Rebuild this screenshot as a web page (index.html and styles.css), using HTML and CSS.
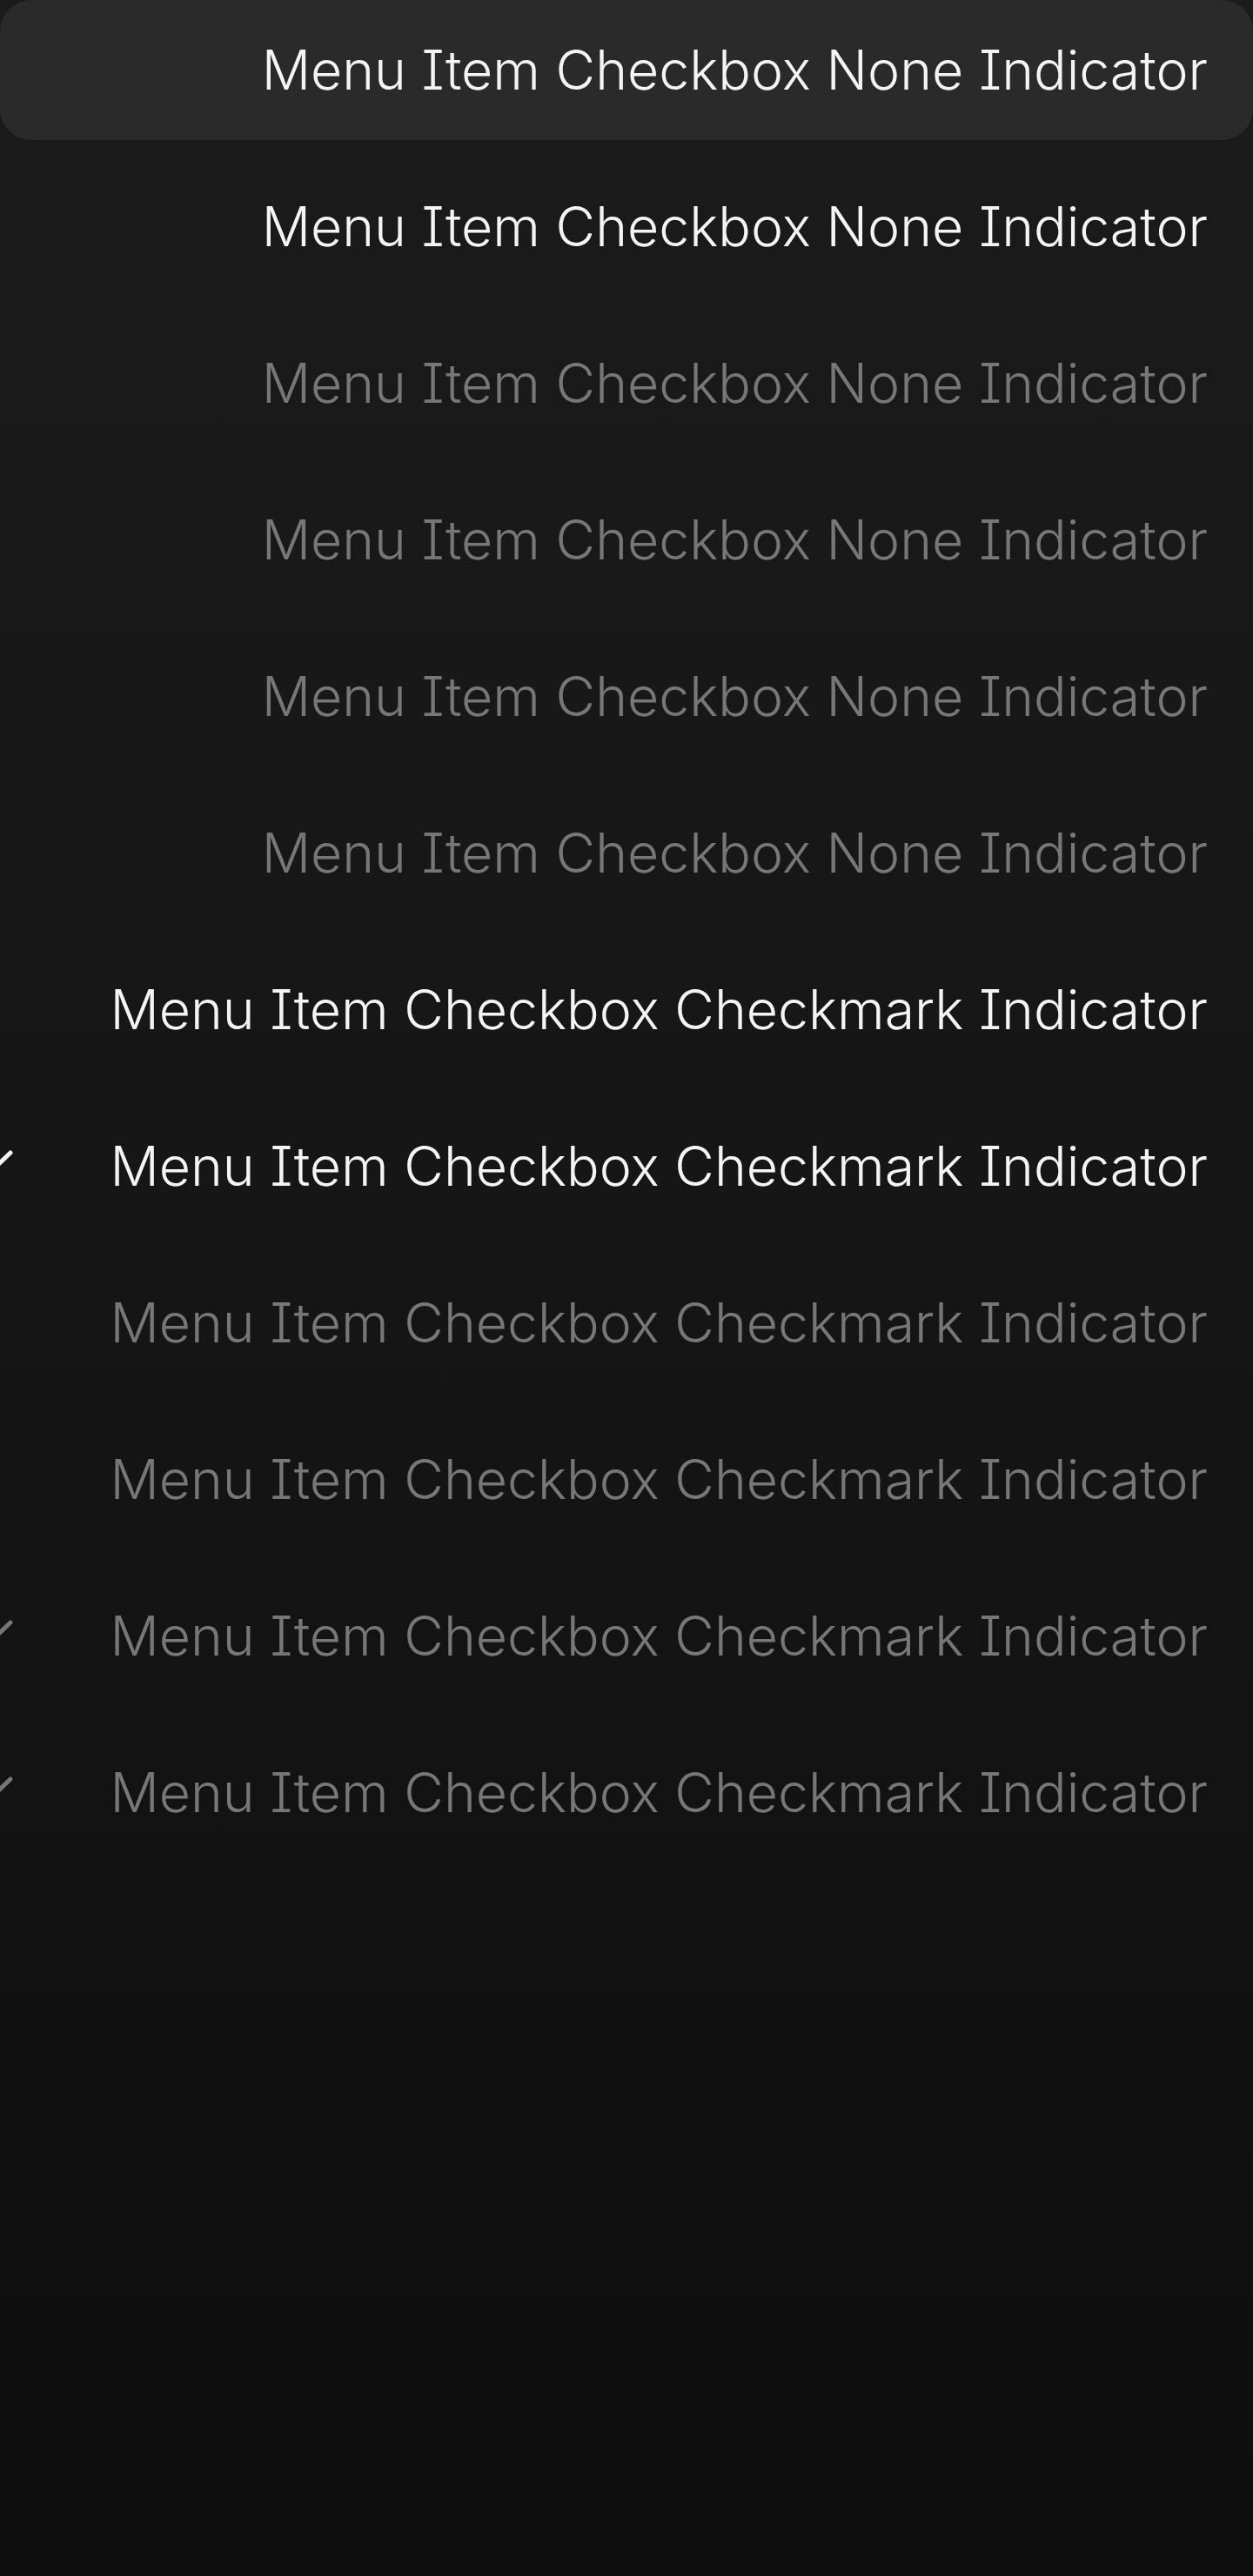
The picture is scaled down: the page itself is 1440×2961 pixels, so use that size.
FILE: index.html
```html
<!DOCTYPE html>
<html lang="en">
<head>
<meta charset="utf-8">
<title>Menu Item Checkbox</title>
<link rel="stylesheet" href="styles.css">
</head>
<body>
<div class="menu" role="menu">
  <div class="item is-highlighted" role="menuitemcheckbox" aria-checked="false"><span class="label">Menu Item Checkbox None Indicator</span></div>
  <div class="item" role="menuitemcheckbox" aria-checked="true"><span class="label">Menu Item Checkbox None Indicator</span></div>
  <div class="item is-disabled" role="menuitemcheckbox" aria-checked="false"><span class="label">Menu Item Checkbox None Indicator</span></div>
  <div class="item is-disabled" role="menuitemcheckbox" aria-checked="true"><span class="label">Menu Item Checkbox None Indicator</span></div>
  <div class="item is-disabled" role="menuitemcheckbox" aria-checked="false"><span class="label">Menu Item Checkbox None Indicator</span></div>
  <div class="item is-disabled" role="menuitemcheckbox" aria-checked="true"><span class="label">Menu Item Checkbox None Indicator</span></div>

  <div class="item" role="menuitemcheckbox" aria-checked="false">
    <svg class="check is-hidden" viewBox="0 0 40 40"><polyline points="4,19 12,28 37,4"/></svg>
    <span class="label">Menu Item Checkbox Checkmark Indicator</span>
  </div>
  <div class="item" role="menuitemcheckbox" aria-checked="true">
    <svg class="check" viewBox="0 0 40 40"><polyline points="4,19 12,28 37,4"/></svg>
    <span class="label">Menu Item Checkbox Checkmark Indicator</span>
  </div>
  <div class="item is-disabled" role="menuitemcheckbox" aria-checked="false">
    <svg class="check is-hidden" viewBox="0 0 40 40"><polyline points="4,19 12,28 37,4"/></svg>
    <span class="label">Menu Item Checkbox Checkmark Indicator</span>
  </div>
  <div class="item is-disabled" role="menuitemcheckbox" aria-checked="false">
    <svg class="check is-hidden" viewBox="0 0 40 40"><polyline points="4,19 12,28 37,4"/></svg>
    <span class="label">Menu Item Checkbox Checkmark Indicator</span>
  </div>
  <div class="item is-disabled" role="menuitemcheckbox" aria-checked="true">
    <svg class="check" viewBox="0 0 40 40"><polyline points="4,19 12,28 37,4"/></svg>
    <span class="label">Menu Item Checkbox Checkmark Indicator</span>
  </div>
  <div class="item is-disabled" role="menuitemcheckbox" aria-checked="true">
    <svg class="check" viewBox="0 0 40 40"><polyline points="4,19 12,28 37,4"/></svg>
    <span class="label">Menu Item Checkbox Checkmark Indicator</span>
  </div>
</div>
</body>
</html>
```

FILE: styles.css
```css
html, body {
  margin: 0;
  padding: 0;
}

body {
  min-height: 2961px;
  background: linear-gradient(to bottom, #1b1b1b 0%, #161616 45%, #0e0e0e 100%);
  font-family: Inter, "Noto Sans", sans-serif;
  font-feature-settings: "cv08" 1;
  overflow: hidden;
}

.menu {
  display: flex;
  flex-direction: column;
  gap: 19px;
}

.item {
  height: 161px;
  display: flex;
  align-items: center;
  justify-content: flex-end;
  padding-right: 52px;
  border-radius: 36px;
  color: #f4f4f4;
  font-size: 62.6px;
  font-weight: 300;
  line-height: 1;
  white-space: nowrap;
}

.item.is-highlighted {
  background: #2a2a2a;
}

.item.is-disabled {
  color: #777777;
}

.label {
  flex: none;
}

.check {
  flex: none;
  width: 40px;
  height: 40px;
  margin-right: 111px;
  overflow: visible;
  fill: none;
  stroke: currentColor;
  stroke-width: 5;
  stroke-linecap: round;
  stroke-linejoin: round;
}

.check.is-hidden {
  visibility: hidden;
}
```
